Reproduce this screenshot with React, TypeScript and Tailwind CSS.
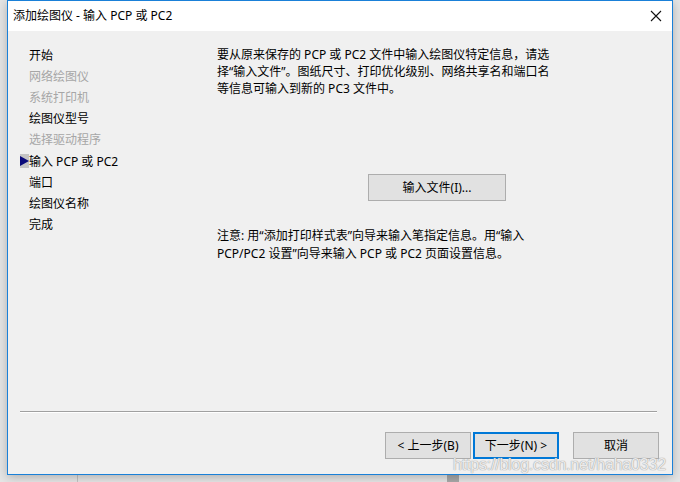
import React from "react";

const navItems: { label: string; disabled?: boolean; current?: boolean }[] = [
  { label: "开始" },
  { label: "网络绘图仪", disabled: true },
  { label: "系统打印机", disabled: true },
  { label: "绘图仪型号" },
  { label: "选择驱动程序", disabled: true },
  { label: "输入 PCP 或 PC2", current: true },
  { label: "端口" },
  { label: "绘图仪名称" },
  { label: "完成" },
];

export default function App() {
  return (
    <div className="relative w-[680px] h-[482px] overflow-hidden bg-[#e6e6e6] font-['Noto_Sans','Noto_Sans_CJK_SC',sans-serif] text-[12px] text-black">
      {/* desktop behind the window */}
      <div className="absolute left-[77px] top-[470px] w-[1px] h-[12px] bg-[#c4c4c4]" />
      <div className="absolute left-[447px] top-[470px] w-[12px] h-[12px] bg-[#a9a9a9]" />

      <div className="relative ml-[7px] w-[666px] h-[475px] border border-[#1a80d8] bg-[#f0f0f0] flex flex-col shadow-[0_2px_10px_rgba(0,0,0,0.25)]">
        {/* title bar */}
        <div className="h-[30px] bg-white flex items-center justify-between shrink-0">
          <span className="pl-[5px] leading-[14px]">添加绘图仪 - 输入 PCP 或 PC2</span>
          <svg width="12" height="12" viewBox="0 0 12 12" className="mr-[10px]">
            <path d="M1 1 L11 11 M11 1 L1 11" stroke="#111" strokeWidth="1.1" fill="none" />
          </svg>
        </div>

        {/* body */}
        <div className="flex flex-1">
          <div className="w-[209px] pt-[14px] shrink-0">
            {navItems.map((it) => (
              <div key={it.label} className="h-[21.1px] flex items-center">
                <div className="w-[9px] ml-[12px] flex items-center">
                  {it.current && (
                    <div className="w-[9px] h-[14px] bg-[#c4c4c4] flex items-center">
                      <svg width="9" height="10" viewBox="0 0 9 10">
                        <path d="M0 0 L9 5 L0 10 Z" fill="#0a0a7a" />
                      </svg>
                    </div>
                  )}
                </div>
                <span className={`leading-[21px] ${it.disabled ? "text-[#a6a6a6]" : "text-black"}`}>
                  {it.label}
                </span>
              </div>
            ))}
          </div>

          <div className="w-[440px] pt-[15px] flex flex-col">
            <p className="leading-[17px]">
              要从原来保存的 PCP 或 PC2 文件中输入绘图仪特定信息，请选
              <br />
              择“输入文件”。图纸尺寸、打印优化级别、网络共享名和端口名
              <br />
              等信息可输入到新的 PC3 文件中。
            </p>
            <div className="flex justify-center mt-[77px]">
              <button className="w-[138px] h-[27px] bg-[#e1e1e1] border border-[#adadad] leading-[14px]">
                输入文件(I)...
              </button>
            </div>
            <p className="leading-[18px] mt-[26px]">
              注意: 用“添加打印样式表”向导来输入笔指定信息。用“输入
              <br />
              PCP/PC2 设置”向导来输入 PCP 或 PC2 页面设置信息。
            </p>
          </div>
        </div>

        {/* separator */}
        <div className="mx-[12px] w-[637px] h-[2px] border-t border-[#a0a0a0] bg-white shrink-0" />

        {/* buttons */}
        <div className="h-[61px] shrink-0 flex items-start pt-[19px] pl-[377px]">
          <button className="w-[86px] h-[27px] bg-[#e1e1e1] border border-[#adadad] leading-[14px]">
            &lt; 上一步(B)
          </button>
          <button className="ml-[2px] w-[86px] h-[27px] bg-[#e1e1e1] border-2 border-[#0078d7] leading-[14px]">
            下一步(N) &gt;
          </button>
          <button className="ml-[14px] w-[86px] h-[27px] bg-[#e1e1e1] border border-[#adadad] leading-[14px]">
            取消
          </button>
        </div>
      </div>

      {/* watermark */}
      <div className="absolute left-[453px] top-[455px] font-['Liberation_Sans',sans-serif] text-[16px] tracking-[-0.2px] leading-[20px] text-white/80 [text-shadow:0_0_1px_#9a9a9a,0_0_1px_#9a9a9a]">
        https://blog.csdn.net/haha0332
      </div>
    </div>
  );
}
